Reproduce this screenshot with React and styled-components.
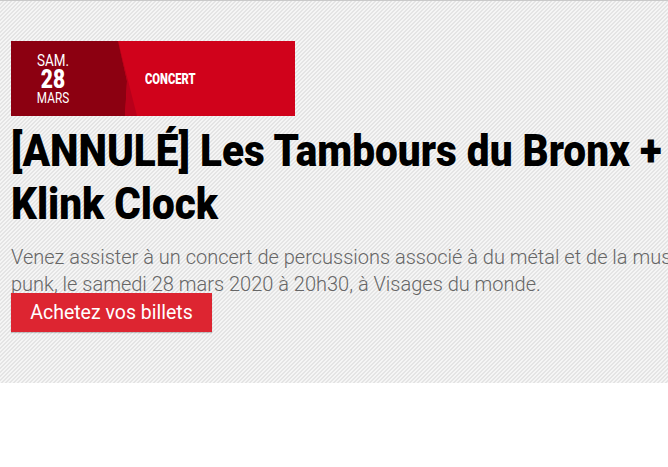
import React from "react";
import styled, { createGlobalStyle } from "styled-components";

const GlobalStyle = createGlobalStyle`
  html, body {
    margin: 0;
    padding: 0;
    overflow: hidden;
    background: #ffffff;
  }
`;

const Page = styled.div`
  width: 726px;
  border-top: 1px solid #c9c9c9;
  padding: 40px 0 50px 11px;
  box-sizing: border-box;
  height: 383px;
  font-family: Roboto, "Noto Sans", sans-serif;
  background-color: #f5f5f5;
  background-image: linear-gradient(
    -45deg,
    #e4e4e4 25%,
    transparent 25%,
    transparent 50%,
    #e4e4e4 50%,
    #e4e4e4 75%,
    transparent 75%
  );
  background-size: 4px 4px;
`;

const Banner = styled.div`
  position: relative;
  display: flex;
  align-items: center;
  width: 284px;
  height: 75px;
  background: #d0021b;
  overflow: hidden;
`;

const DateShape = styled.div`
  position: absolute;
  inset: 0;
  background: #8c0011;
  clip-path: polygon(0 0, 107px 0, 116px 40px, 114px 100%, 0 100%);
`;

const Facet = styled.div`
  position: absolute;
  inset: 0;
  background: #b8001a;
  clip-path: polygon(107px 0, 126px 100%, 114px 100%, 116px 40px);
`;

const DateBox = styled.div`
  position: relative;
  width: 84px;
  display: flex;
  flex-direction: column;
  align-items: center;
  color: #fff;
  transform: scaleX(0.84);
`;

const DateLine = styled.span`
  font-size: ${(p) => p.$size}px;
  font-weight: ${(p) => (p.$bold ? 900 : 400)};
  line-height: ${(p) => p.$lh}px;
`;

const Category = styled.span`
  position: relative;
  margin-left: 50px;
  color: #fff;
  font-size: 14px;
  font-weight: 900;
  text-transform: uppercase;
  transform: scaleX(0.8);
  transform-origin: left center;
`;

const Title = styled.h1`
  width: 785px;
  margin: 8px 0 0;
  font-size: 45px;
  line-height: 53px;
  font-weight: 900;
  color: #000;
  transform: scaleX(0.9);
  transform-origin: left top;
`;

const Lead = styled.p`
  width: 712px;
  margin: 14px 0 0;
  font-size: 20px;
  line-height: 27px;
  font-weight: 300;
  color: #666;
`;

const BuyButton = styled.a`
  display: inline-flex;
  align-items: center;
  justify-content: center;
  margin-top: -5px;
  width: 201px;
  height: 39px;
  background: #dd2531;
  color: #fff;
  font-size: 19.5px;
  font-weight: 400;
  text-decoration: none;
  box-shadow: 0 1px 1px rgba(0, 0, 0, 0.2);
`;

export default function App() {
  return (
    <>
      <GlobalStyle />
      <Page>
        <Banner>
          <DateShape />
          <Facet />
          <DateBox>
            <DateLine $size={16} $lh={17}>SAM.</DateLine>
            <DateLine $size={25} $lh={22} $bold>28</DateLine>
            <DateLine $size={14} $lh={15}>MARS</DateLine>
          </DateBox>
          <Category>Concert</Category>
        </Banner>
        <Title>[ANNULÉ] Les Tambours du Bronx + Klink Clock</Title>
        <Lead>
          Venez assister à un concert de percussions associé à du métal et de la
          musique punk, le samedi 28 mars 2020 à 20h30, à Visages du monde.
        </Lead>
        <BuyButton href="#">Achetez vos billets</BuyButton>
      </Page>
    </>
  );
}
